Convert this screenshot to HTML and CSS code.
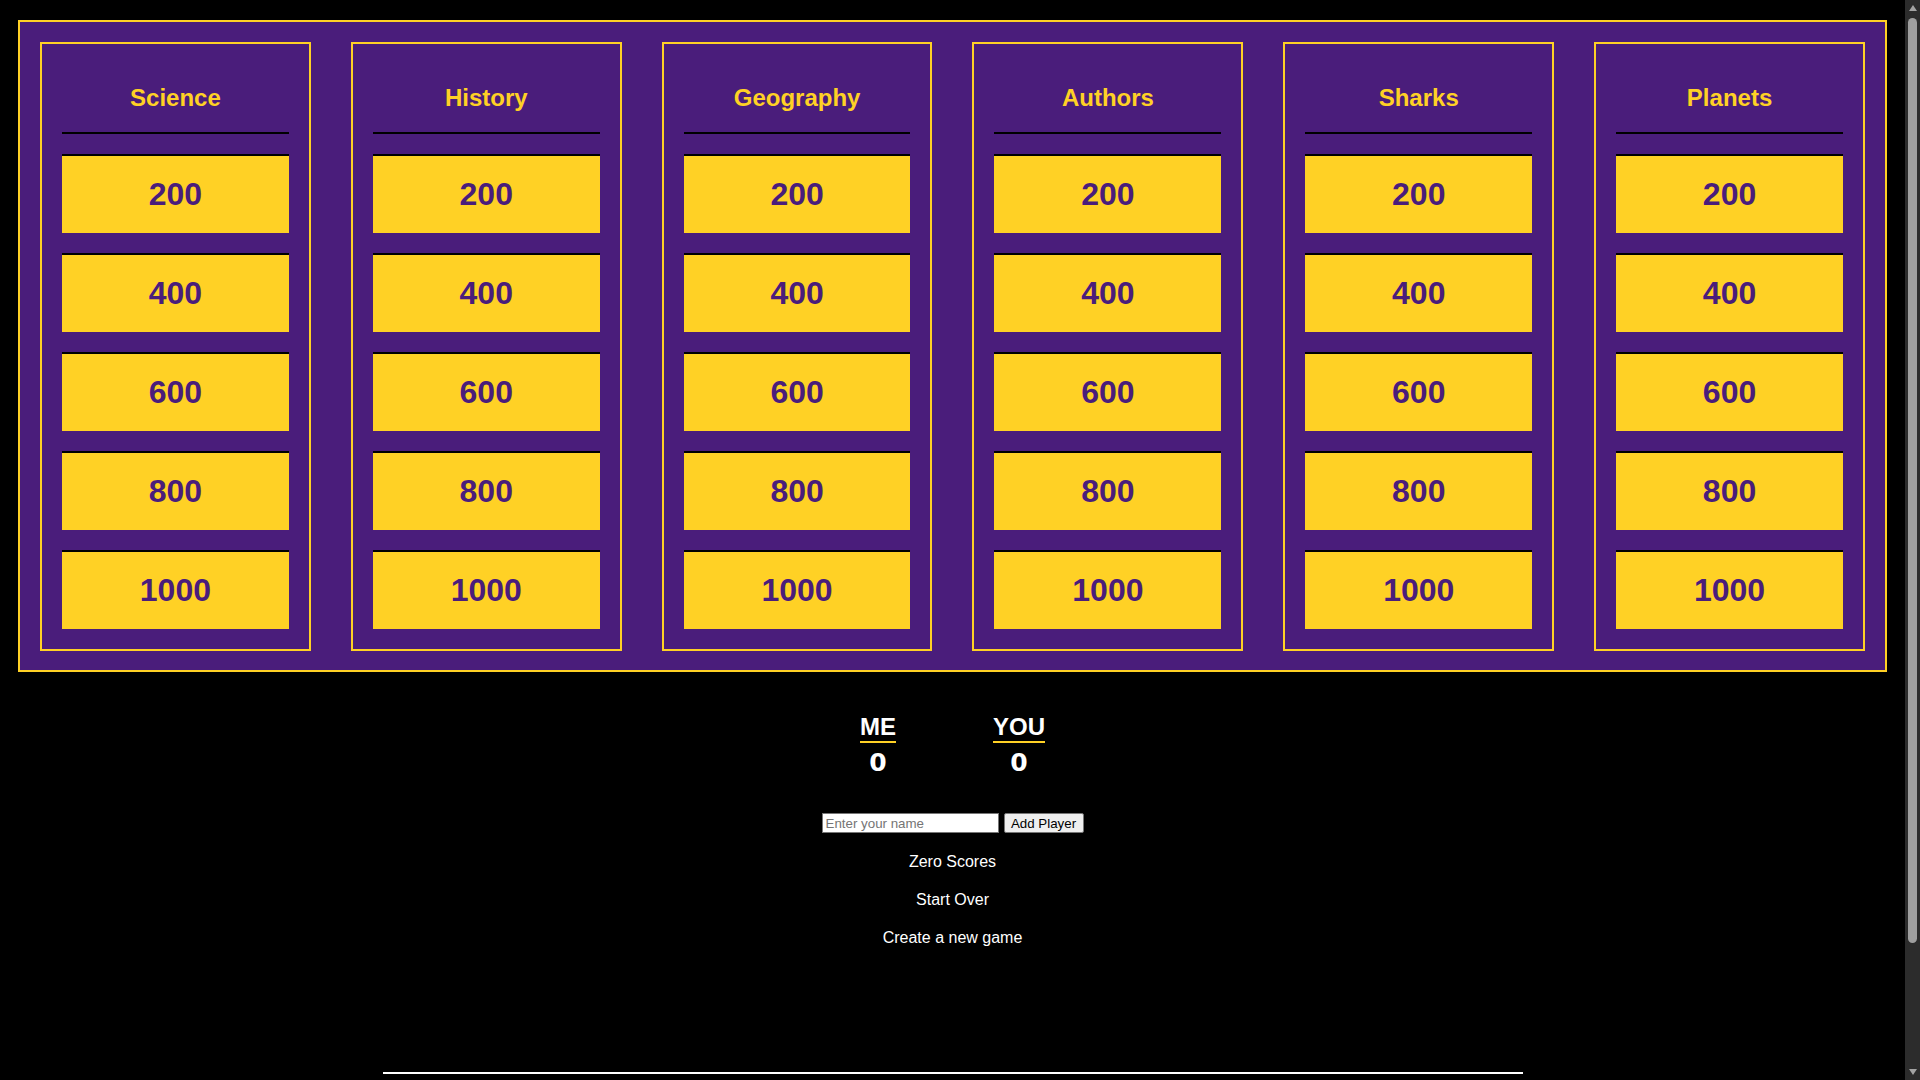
FILE: index.html
```html
<!DOCTYPE html>
<html lang="en">
<head>
<meta charset="utf-8">
<title>Jeopardy</title>
<link rel="stylesheet" href="styles.css">
</head>
<body>
<main class="page">
  <section class="board">
    <div class="category">
      <h2 class="cat-title">Science</h2>
      <div class="tiles">
        <div class="tile">200</div><div class="tile">400</div><div class="tile">600</div><div class="tile">800</div><div class="tile">1000</div>
      </div>
    </div>
    <div class="category">
      <h2 class="cat-title">History</h2>
      <div class="tiles">
        <div class="tile">200</div><div class="tile">400</div><div class="tile">600</div><div class="tile">800</div><div class="tile">1000</div>
      </div>
    </div>
    <div class="category">
      <h2 class="cat-title">Geography</h2>
      <div class="tiles">
        <div class="tile">200</div><div class="tile">400</div><div class="tile">600</div><div class="tile">800</div><div class="tile">1000</div>
      </div>
    </div>
    <div class="category">
      <h2 class="cat-title">Authors</h2>
      <div class="tiles">
        <div class="tile">200</div><div class="tile">400</div><div class="tile">600</div><div class="tile">800</div><div class="tile">1000</div>
      </div>
    </div>
    <div class="category">
      <h2 class="cat-title">Sharks</h2>
      <div class="tiles">
        <div class="tile">200</div><div class="tile">400</div><div class="tile">600</div><div class="tile">800</div><div class="tile">1000</div>
      </div>
    </div>
    <div class="category">
      <h2 class="cat-title">Planets</h2>
      <div class="tiles">
        <div class="tile">200</div><div class="tile">400</div><div class="tile">600</div><div class="tile">800</div><div class="tile">1000</div>
      </div>
    </div>
  </section>

  <section class="players">
    <div class="player">
      <h2 class="player-name">ME</h2>
      <div class="player-score">0</div>
    </div>
    <div class="player">
      <h2 class="player-name">YOU</h2>
      <div class="player-score">0</div>
    </div>
  </section>

  <form class="add-player">
    <input class="name-input" type="text" placeholder="Enter your name">
    <button class="add-btn" type="button">Add Player</button>
  </form>

  <nav class="controls">
    <div class="control">Zero Scores</div>
    <div class="control">Start Over</div>
    <div class="control">Create a new game</div>
  </nav>

  <footer class="footer"></footer>
</main>

<div class="scrollbar" aria-hidden="true">
  <div class="sb-arrow sb-up"></div>
  <div class="sb-thumb"></div>
  <div class="sb-arrow sb-down"></div>
</div>
</body>
</html>
```

FILE: styles.css
```css
html {
  color-scheme: dark;
  background: #000;
}

body {
  margin: 0 15px 0 0;
  background: #000;
  color: #fff;
  font-family: "Liberation Sans", Arial, sans-serif;
}

.page {
  display: flex;
  flex-direction: column;
  align-items: stretch;
}

.board {
  margin: 20px 18px 0 18px;
  border: 2px solid #ffd125;
  background: #4a1d7b;
  padding: 20px 20px 19px 20px;
  display: flex;
  gap: 40px;
}

.category {
  flex: 1 1 0;
  border: 2px solid #ffd125;
  padding: 0 20px 20px 20px;
}

.cat-title {
  margin: 0;
  padding: 40px 0 20px 0;
  line-height: 28px;
  font-size: 24px;
  font-weight: bold;
  text-align: center;
  color: #ffd125;
  border-bottom: 2px solid #000;
}

.tiles {
  display: flex;
  flex-direction: column;
  gap: 20px;
  margin-top: 20px;
}

.tile {
  height: 77px;
  border-top: 2px solid #000;
  background: #ffd125;
  color: #4a1d7b;
  font-size: 32px;
  font-weight: bold;
  display: flex;
  align-items: center;
  justify-content: center;
}

.players {
  display: flex;
  justify-content: center;
  gap: 97px;
  margin-top: 41px;
}

.player {
  display: flex;
  flex-direction: column;
  align-items: center;
}

.player-name {
  margin: 0;
  font-size: 24px;
  line-height: 28px;
  font-weight: bold;
  color: #fff;
  border-bottom: 2px solid #ffd125;
}

.player-score {
  margin-top: 6px;
  font-family: "DejaVu Sans", Verdana, sans-serif;
  font-size: 25px;
  line-height: 28px;
  font-weight: bold;
  color: #fff;
}

.add-player {
  display: flex;
  justify-content: center;
  gap: 5px;
  margin: 36px 0 0 0;
}

.name-input {
  color-scheme: light;
  box-sizing: border-box;
  width: 177px;
  height: 20px;
  padding: 1px 3px;
  border: 1px solid #767676;
  background: #fff;
  color: #000;
  font-family: "Liberation Sans", Arial, sans-serif;
  font-size: 13.33px;
}

.name-input::placeholder {
  color: #757575;
}

.add-btn {
  color-scheme: light;
  box-sizing: border-box;
  width: 80px;
  height: 20px;
  padding: 0;
  border: 1px solid #767676;
  border-radius: 2px;
  background: #efefef;
  color: #000;
  font-family: "Liberation Sans", Arial, sans-serif;
  font-size: 13.33px;
}

.controls {
  display: flex;
  flex-direction: column;
  align-items: center;
  margin-top: 10px;
}

.control {
  line-height: 38px;
  font-size: 16px;
  color: #fff;
}

.footer {
  align-self: center;
  width: 1140px;
  margin-top: 115px;
  border-top: 2px solid #fff;
  height: 150px;
}

/* imitation of the window's dark scrollbar */
.scrollbar {
  position: fixed;
  top: 0;
  right: 0;
  width: 15px;
  height: 100vh;
  background: #2c2c2c;
  display: flex;
  flex-direction: column;
  align-items: center;
}

.sb-arrow {
  width: 0;
  height: 0;
  border-left: 4.5px solid transparent;
  border-right: 4.5px solid transparent;
}

.sb-up {
  margin-top: 5px;
  border-bottom: 6px solid #a3a3a3;
}

.sb-thumb {
  width: 9px;
  height: 925px;
  margin-top: 7px;
  border-radius: 5px;
  background: #9f9f9f;
}

.sb-down {
  margin-top: auto;
  margin-bottom: 5px;
  border-top: 6px solid #a3a3a3;
}
```
